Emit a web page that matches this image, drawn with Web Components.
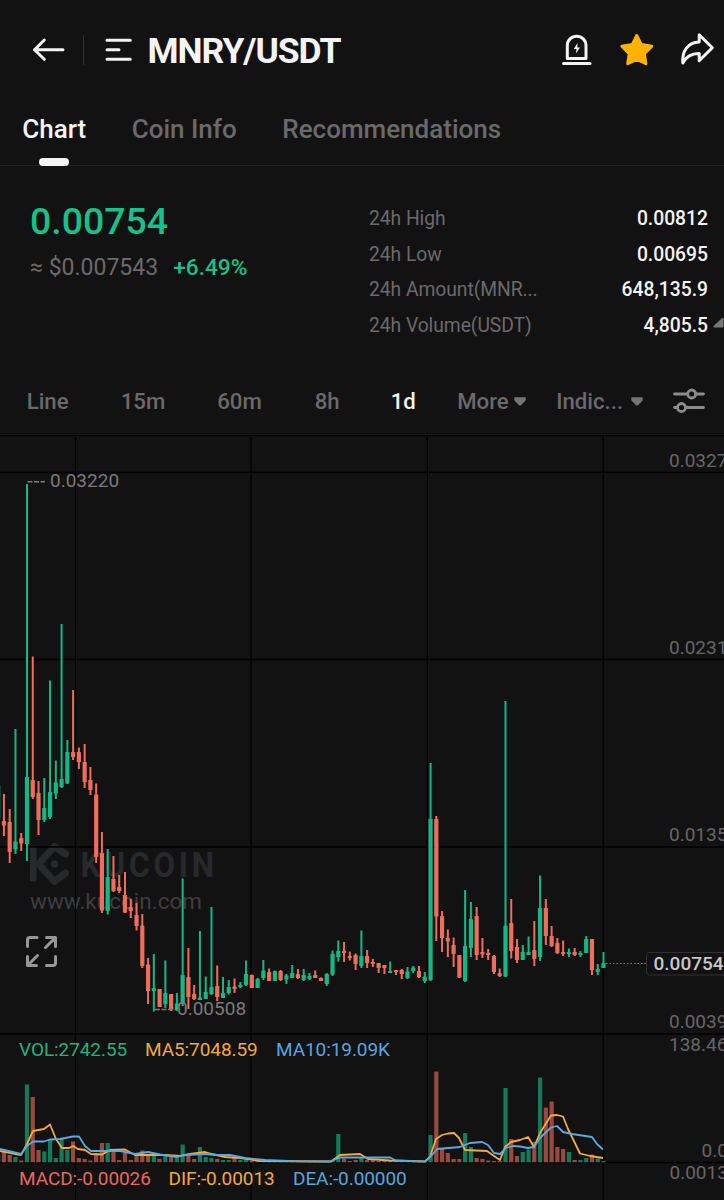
<!DOCTYPE html>
<html lang="en">
<head>
<meta charset="UTF-8">
<meta name="viewport" content="width=device-width, initial-scale=1.0">
<title>MNRY/USDT</title>
<style>
  body {
    margin: 0;
    width: 724px;
    height: 1200px;
    overflow: hidden;
    background: #121212;
    color: #f4f4f4;
    font-family: Roboto, "Liberation Sans", sans-serif;
    --muted: #6a6a6a;
    --up: #18c08a;
    --line: #242424;
  }
</style>
</head>
<body>
  <pair-header>MNRY/USDT</pair-header>

  <page-tabs>
    <tab-item active>Chart</tab-item>
    <tab-item>Coin Info</tab-item>
    <tab-item>Recommendations</tab-item>
  </page-tabs>

  <price-summary>
    <span slot="price">0.00754</span>
    <span slot="fiat">≈ $0.007543</span>
    <span slot="change">+6.49%</span>
    <stat-row label="24h High">0.00812</stat-row>
    <stat-row label="24h Low">0.00695</stat-row>
    <stat-row label="24h Amount(MNR...">648,135.9</stat-row>
    <stat-row label="24h Volume(USDT)">4,805.5</stat-row>
  </price-summary>

  <period-bar>
    <period-item>Line</period-item>
    <period-item>15m</period-item>
    <period-item>60m</period-item>
    <period-item>8h</period-item>
    <period-item active>1d</period-item>
    <period-item menu>More</period-item>
    <period-item menu style="--menu-gap: 8px">Indic...</period-item>
  </period-bar>

  <kline-chart></kline-chart>

<script>
class PairHeader extends HTMLElement {
  constructor() {
    super();
    this.attachShadow({ mode: 'open' });
  }

  connectedCallback() {
    this.shadowRoot.innerHTML = `
      <style>
        :host {
          display: flex;
          align-items: center;
          box-sizing: border-box;
          height: 100px;
          padding: 0 7px 0 30px;
        }

        svg {
          display: block;
          flex: none;
          fill: none;
          stroke: #f4f4f4;
          stroke-width: 3;
          stroke-linecap: round;
          stroke-linejoin: round;
        }

        .divider {
          width: 1px;
          height: 30px;
          margin: 0 20px 0 15px;
          background: #303030;
        }

        h1 {
          flex: 1;
          margin: 1px 0 0 13.500px;
          font-size: 35.500px;
          line-height: 42px;
          font-weight: 700;
          letter-spacing: -1.050px;
        }

        .actions {
          display: flex;
          gap: 20px;
        }
      </style>

      <svg width="38" height="40" viewBox="30 30 38 40"><path d="M63 49.7H34.500M44.300 40L34.500 49.700L44.300 59.300"/></svg>
      <span class="divider"></span>
      <svg width="30" height="40" viewBox="104 30 30 40"><path d="M107 40.200H130.300M107 49.700H119M107 59.200H130.300"/></svg>
      <h1><slot></slot></h1>
      <div class="actions">
        <svg width="40" height="40" viewBox="557 30 40 40">
          <path d="M567.300 58.500V45.500A9.350 9.350 0 0 1 586 45.500V58.500Z"/>
          <path d="M563.500 63.500H590"/>
          <path d="M577.500 43L573.800 49H576.500L576 53.500L580 47.500H577.300Z" style="fill:#f4f4f4;stroke:none"/>
        </svg>
        <svg width="40" height="40" viewBox="617 30 40 40">
          <path style="fill:#ffb300;stroke:#ffb300" d="M636.800 35.500L641.300 44.600L651.800 46.200L644.400 53.700L645.900 63.700L636.800 59.300L627.700 63.700L629.200 53.700L621.900 46.200L632.300 44.600Z"/>
        </svg>
        <svg width="40" height="40" viewBox="677 30 40 40">
          <path d="M699.200 34.800L712.300 47.700L699.200 60.800V53.500C690.500 53.300 686 57 682.800 63C681.800 51 688 42.300 699.200 42Z"/>
        </svg>
      </div>
    `;
  }
}

class PageTabs extends HTMLElement {
  constructor() {
    super();
    this.attachShadow({ mode: 'open' });
  }

  connectedCallback() {
    this.shadowRoot.innerHTML = `
      <style>
        :host {
          display: flex;
          gap: 45.500px;
          box-sizing: border-box;
          height: 66px;
          padding-left: 22.300px;
          border-bottom: 1px solid var(--line);
        }
      </style>
      <slot></slot>
    `;
  }
}

class TabItem extends HTMLElement {
  constructor() {
    super();
    this.attachShadow({ mode: 'open' });
  }

  connectedCallback() {
    this.shadowRoot.innerHTML = `
      <style>
        :host {
          display: flex;
          flex-direction: column;
          align-items: center;
          justify-content: space-between;
          box-sizing: border-box;
          height: 66px;
          padding-top: 13px;
          color: var(--muted);
          font-size: 26px;
          line-height: 32px;
          font-weight: 500;
        }

        :host([active]) {
          color: #f4f4f4;
        }

        i {
          display: none;
          width: 30px;
          height: 8px;
          border-radius: 4px;
          background: #f4f4f4;
        }

        :host([active]) i {
          display: block;
        }
      </style>
      <span><slot></slot></span>
      <i></i>
    `;
  }
}

class PriceSummary extends HTMLElement {
  constructor() {
    super();
    this.attachShadow({ mode: 'open' });
  }

  connectedCallback() {
    this.shadowRoot.innerHTML = `
      <style>
        :host {
          display: flex;
          justify-content: space-between;
          box-sizing: border-box;
          height: 200px;
          padding: 32px 0 0 30px;
        }

        .price {
          color: var(--up);
          font-size: 37.400px;
          line-height: 46px;
          font-weight: 500;
        }

        .sub {
          display: flex;
          gap: 15px;
          margin-top: 10px;
          color: var(--muted);
          font-size: 23px;
          line-height: 28px;
        }

        .change {
          color: var(--up);
          font-size: 22.700px;
          font-weight: 500;
        }

        .stats {
          display: flex;
          flex-direction: column;
          width: 339px;
          padding-top: 3px;
        }

        .stats-wrap {
          display: flex;
          align-items: flex-start;
        }

        .corner {
          flex: none;
          width: 16px;
          height: 12px;
          margin-top: 119px;
        }
      </style>
      <div>
        <div class="price"><slot name="price"></slot></div>
        <div class="sub">
          <slot name="fiat"></slot>
          <span class="change"><slot name="change"></slot></span>
        </div>
      </div>
      <div class="stats-wrap">
        <div class="stats"><slot></slot></div>
        <svg class="corner" viewBox="0 0 16 12"><path d="M6.500 9.500L14.500 2V9.500Z" fill="#777" stroke="#777" stroke-width="2" stroke-linejoin="round"/></svg>
      </div>
    `;
  }
}

class StatRow extends HTMLElement {
  constructor() {
    super();
    this.attachShadow({ mode: 'open' });
  }

  connectedCallback() {
    this.shadowRoot.innerHTML = `
      <style>
        :host {
          display: flex;
          justify-content: space-between;
          height: 35.600px;
          font-size: 19.300px;
          line-height: 35.600px;
        }

        .label {
          color: var(--muted);
          letter-spacing: -0.050px;
        }

        .value {
          font-weight: 500;
        }
      </style>
      <span class="label">${this.getAttribute('label')}</span>
      <span class="value"><slot></slot></span>
    `;
  }
}

class PeriodBar extends HTMLElement {
  constructor() {
    super();
    this.attachShadow({ mode: 'open' });
  }

  connectedCallback() {
    this.shadowRoot.innerHTML = `
      <style>
        :host {
          display: grid;
          grid-template-columns: 94px 96.500px 97.500px 76px 66.500px 99px 114.500px 36px;
          align-items: center;
          box-sizing: border-box;
          height: 69px;
          padding: 1px 0 0 26.700px;
        }

        svg {
          display: block;
          fill: none;
          stroke: #8c8c8c;
          stroke-width: 2.800;
          stroke-linecap: round;
        }
      </style>
      <slot></slot>
      <svg width="36" height="30" viewBox="671 386 36 30">
        <path d="M674.500 394H687M696 394H703.500M674.500 407.500H677M686 407.500H703.500"/>
        <circle cx="691.700" cy="394" r="4"/>
        <circle cx="681.500" cy="407.500" r="4"/>
      </svg>
    `;
  }
}

class PeriodItem extends HTMLElement {
  constructor() {
    super();
    this.attachShadow({ mode: 'open' });
  }

  connectedCallback() {
    const caret = this.hasAttribute('menu')
      ? '<svg width="12" height="9" viewBox="0 0 12 9"><path d="M1 1H11V3L6.500 7.800H5.500L1 3Z"/></svg>'
      : '';

    this.shadowRoot.innerHTML = `
      <style>
        :host {
          display: flex;
          align-items: center;
          color: var(--muted);
          font-size: 22.200px;
          line-height: 28px;
          font-weight: 500;
          white-space: nowrap;
        }

        :host([active]) {
          color: #f4f4f4;
        }

        svg {
          flex: none;
          margin-left: var(--menu-gap, 5px);
          fill: #747474;
          stroke: #747474;
          stroke-width: 1.500;
          stroke-linejoin: round;
        }
      </style>
      <slot></slot>${caret}
    `;
  }
}

// side, high, body top, body bottom, low, volume top
const CANDLES = [
  ['u', 778, 785, 818, 820, 1154],
  ['d', 794, 821, 825.5, 836, 1152],
  ['d', 809, 822, 852, 863, 1155],
  ['u', 729, 841.5, 849.5, 854, 1157],
  ['d', 833, 838, 843.5, 851, 1160.5],
  ['u', 484, 777, 844, 861, 1084.5],
  ['d', 656.5, 780, 797, 799, 1097],
  ['d', 781, 793, 820, 835, 1150],
  ['u', 778, 808, 820, 822, 1151.5],
  ['u', 680.5, 792, 817, 819, 1140],
  ['u', 760.5, 782.5, 793.5, 799, 1158],
  ['u', 624, 779, 787, 788, 1139],
  ['u', 740, 752, 783.5, 784, 1150],
  ['d', 690, 752, 757, 760, 1141.5],
  ['d', 747.5, 752, 762, 769, 1158],
  ['d', 744, 762, 782, 788, 1159],
  ['d', 767, 780, 790, 795, 1160.5],
  ['d', 783.5, 794.5, 857, 863, 1153],
  ['d', 832, 853, 910.5, 913, 1143],
  ['u', 849, 877, 911, 914.5, 1143],
  ['d', 856, 879, 891, 892, 1151],
  ['d', 875, 887, 891, 893, 1160],
  ['d', 872, 895, 912.5, 913, 1153],
  ['d', 899, 907, 911, 918, 1160],
  ['d', 903, 915, 926, 930.5, 1155],
  ['d', 914, 925.5, 966, 968, 1150.5],
  ['d', 958, 964.5, 991, 1004, 1154],
  ['u', 954, 988, 991, 1011.5, 1156],
  ['d', 989, 989, 1007, 1007, 1159],
  ['u', 960.5, 993, 1004, 1008, 1156],
  ['d', 994, 994, 1010, 1011, 1157],
  ['u', 993, 1003.5, 1009, 1011, 1157],
  ['u', 878.5, 975, 1004, 1006, 1144.5],
  ['d', 948, 977, 997, 1009, 1155],
  ['d', 985, 994, 999, 1000, 1159],
  ['u', 931, 997.5, 1000, 1000, 1147],
  ['u', 976.5, 992, 999, 999, 1157],
  ['u', 907, 987, 994, 995, 1158],
  ['d', 965.5, 986, 997, 1001, 1159],
  ['u', 977, 993, 998, 998, 1160],
  ['u', 980, 987, 993, 994.5, 1160],
  ['d', 978.5, 986.5, 989, 993, 1158],
  ['u', 982, 985, 987, 988, 1160],
  ['u', 960.5, 974, 985, 986, 1160],
  ['d', 974.5, 975, 988, 988, 1161],
  ['u', 978, 979, 988, 988, 1161],
  ['u', 960, 970.5, 978, 980, 1161],
  ['d', 968.5, 972, 981, 981, 1161],
  ['u', 970.5, 971, 981, 981, 1161],
  ['d', 970, 971, 980, 981, 1161],
  ['u', 974, 975.5, 979.5, 984, 1161],
  ['u', 965, 973, 978, 978, 1161],
  ['d', 969, 974, 978, 979, 1161],
  ['u', 969, 975, 980, 981, 1161],
  ['u', 973, 976, 979, 980, 1161],
  ['d', 970.5, 975, 978, 978, 1161],
  ['d', 977.5, 978, 981, 981, 1161],
  ['u', 973, 974, 984, 986, 1161],
  ['u', 950.5, 954, 974.5, 976, 1160],
  ['u', 940.5, 951, 957, 961.5, 1134],
  ['d', 942, 951, 953, 962, 1158.5],
  ['d', 951.5, 956, 958, 960.5, 1161],
  ['d', 953.5, 955, 964, 970, 1160],
  ['u', 930.5, 956, 966, 968, 1158],
  ['d', 950, 956, 963, 968, 1160],
  ['d', 959, 962, 964, 967, 1160],
  ['d', 963, 963, 968, 973, 1161],
  ['d', 965, 965, 968, 974, 1161],
  ['u', 961.5, 971, 973, 973, 1161],
  ['d', 970, 970, 972, 975, 1161],
  ['d', 969, 970, 974, 979, 1161],
  ['u', 967, 971.5, 978, 979, 1161],
  ['u', 966, 967.5, 971, 973, 1161],
  ['d', 966, 971, 977, 978, 1161],
  ['u', 972, 976.5, 981, 983, 1161],
  ['u', 763, 819, 980, 981, 1135],
  ['d', 816, 819, 916.5, 941, 1071.5],
  ['d', 911, 916, 938, 952, 1149],
  ['d', 929.5, 938, 941.5, 957, 1153],
  ['d', 937.5, 945, 954, 967, 1159],
  ['d', 955, 955, 977.5, 978, 1159],
  ['u', 890, 946, 981, 982, 1133],
  ['u', 902, 919, 948, 957, 1147],
  ['d', 907, 916, 955, 960, 1158],
  ['d', 938, 952, 954.5, 958, 1159],
  ['d', 949, 953, 955, 960, 1160.5],
  ['d', 955, 956, 972, 974, 1161],
  ['d', 968.5, 973, 976, 977, 1161],
  ['u', 701, 925.5, 976.5, 977, 1088],
  ['d', 899, 923, 951, 958.5, 1139],
  ['d', 939, 947, 960, 963, 1156],
  ['u', 945, 952, 960, 960, 1152],
  ['u', 936.5, 952, 955, 955, 1149.5],
  ['d', 921, 950, 959, 966, 1142],
  ['u', 875.5, 908, 957, 961, 1077.5],
  ['d', 899, 908, 936, 945, 1107.5],
  ['d', 926, 936, 946, 947, 1101.5],
  ['d', 938, 943, 953, 954, 1147],
  ['d', 940.5, 952, 954, 956, 1149],
  ['u', 948.5, 952, 954, 957, 1152],
  ['d', 948, 952, 955, 956, 1160],
  ['u', 951, 953, 955, 957, 1160],
  ['u', 936, 939, 953, 953, 1158],
  ['d', 939, 939, 970, 975, 1154.5],
  ['u', 964, 969, 972, 975, 1158.5],
  ['u', 952, 963, 968, 968, 1161],
];

const FIRST_X = -1.83;
const STEP = 5.765;
const VOL_BASE = 1162.3;

const MA5 = '0,1151 21,1155 27,1144 33,1131 44,1129 50,1124.5 56,1139 62,1148 69,1148 73,1146 78,1149 85,1150 91,1154 102,1154.5 110,1150 125,1149.5 135,1155 148,1155 165,1155 180,1156 190,1154 205,1152 212,1154 225,1157 240,1158 260,1161 331,1161.5 340,1155 360,1154 368,1159 390,1160.5 425,1161.5 430,1157 436,1139 442,1135 448,1133.5 454,1133 459,1138 465,1150 487,1151 494,1156 500,1160 505,1147 511,1142 520,1140 528,1137 534,1147 540,1133 551,1115.5 557,1115 563,1116.5 568,1129 580,1153.5 590,1156 603,1158';
const MA10 = '0,1149 21,1154 27,1146 33,1141.5 44,1141.5 50,1139.5 60,1139 73,1136.5 79,1136.5 85,1146 91,1151 108,1151 120,1151 135,1154 148,1152 160,1154.5 177,1157 185,1155 205,1154 215,1155 230,1155 245,1158 265,1160 300,1161.3 330,1161.5 340,1157.5 390,1157.5 396,1160.5 425,1161.5 432,1155 437,1149 460,1147 470,1143 482,1142 488,1145 494,1153 500,1154 506,1148 513,1146 520,1146.5 528,1148 534,1147 540,1138 551,1127.5 557,1126 563,1132 572,1134 592,1137 597,1144 603,1149.5';

class KlineChart extends HTMLElement {
  constructor() {
    super();
    this.attachShadow({ mode: 'open' });
  }

  connectedCallback() {
    this.render();
  }

  candles() {
    return CANDLES.map(([side, high, top, bottom, low], i) => {
      const x = FIRST_X + i * STEP;
      const height = Math.max(bottom - top, 2);
      return `<g class="${side}">
        <rect x="${(x - 1).toFixed(2)}" y="${high}" width="2" height="${low - high}"/>
        <rect x="${(x - 2.1).toFixed(2)}" y="${top}" width="4.2" height="${height}" rx="0.6"/>
      </g>`;
    }).join('');
  }

  volumes() {
    return CANDLES.map(([side, , , , , top], i) => {
      const x = FIRST_X + i * STEP;
      return `<rect class="v${side}" x="${(x - 2.1).toFixed(2)}" y="${top}" width="4.2" height="${(VOL_BASE - top).toFixed(1)}"/>`;
    }).join('');
  }

  render() {
    this.shadowRoot.innerHTML = `
      <style>
        :host {
          display: block;
          height: 765px;
        }

        svg {
          display: block;
          font-size: 19px;
          font-family: inherit;
        }

        .grid {
          stroke: #000;
          stroke-width: 1.300;
        }

        .u { fill: #14b887; }
        .d { fill: #ee6e5b; }
        .vu { fill: #15795a; }
        .vd { fill: #984a40; }

        .ma {
          fill: none;
          stroke-width: 1.800;
          stroke-linejoin: round;
        }

        .axis { fill: #666; }
        .mark { fill: #7a7a7a; }
        .dash { stroke: #7a7a7a; stroke-width: 1.500; stroke-dasharray: 5 1.500; }
        .brand { fill: #27292b; }

        .expand {
          fill: none;
          stroke: #979797;
          stroke-width: 3;
          stroke-linecap: round;
          stroke-linejoin: round;
        }
      </style>

      <svg width="724" height="765" viewBox="0 435 724 765">
        <g class="brand">
          <rect x="30" y="847" width="6.500" height="34.500" rx="2.500"/>
          <path d="M65.500 854L54.500 846.500L38.500 864L54.500 881.500L65.500 873" fill="none" stroke="#27292b" stroke-width="7" stroke-linejoin="round" stroke-linecap="round"/>
          <circle cx="54.500" cy="864" r="3.800"/>
          <text transform="translate(80.500 877) scale(0.880 1)" font-size="36" font-weight="700" letter-spacing="4.200">KUCOIN</text>
        </g>
        <text x="30" y="908.500" font-size="22.500" fill="#3e3e3e" textLength="172">www.kucoin.com</text>

        <path class="grid" d="M0 435.500H724M0 472.500H724M0 659.500H724M0 847H724M0 1034H724M0 1162.500H724M75.500 435V1200M251 435V1200M427.300 435V1200M603.200 435V1200"/>

        <g>${this.candles()}</g>
        <g>${this.volumes()}</g>
        <polyline class="ma" stroke="#f5a93e" points="${MA5}"/>
        <polyline class="ma" stroke="#5aaae2" points="${MA10}"/>

        <path class="dash" d="M27.500 481.800H45"/>
        <text class="mark" x="50" y="487.300">0.03220</text>
        <path class="dash" d="M155 1009.500H176"/>
        <text class="mark" x="177" y="1015.300">0.00508</text>

        <path class="expand" d="M27.500 946.500V940Q27.500 937.500 30 937.500H37M46.500 937.500H55.500V946.500M54.500 938.500L45.500 947.500M27.500 956.500V965.500H36.500M28.500 964.500L37.500 955.500M55.500 956.500V963Q55.500 965.500 53 965.500H46.500"/>

        <g class="axis">
          <text x="669" y="467">0.0327</text>
          <text x="669" y="654.300">0.0231</text>
          <text x="669" y="841">0.0135</text>
          <text x="669" y="1028">0.0039</text>
          <text x="669" y="1051">138.46</text>
          <text x="701.500" y="1157">0.0</text>
          <text x="669.500" y="1179.300">0.0013</text>
        </g>

        <path d="M606 963.500H646" stroke="#7a7a7a" stroke-width="1.200" stroke-dasharray="1.500 2"/>
        <rect x="646.500" y="952.500" width="90" height="22.500" rx="3" fill="#121212" stroke="#303030"/>
        <text x="653.500" y="969.700" fill="#c8c8c8" font-weight="500">0.00754</text>

        <g letter-spacing="-0.080">
          <text x="19" y="1056.300" fill="#1fb381">VOL:2742.55</text>
          <text x="145" y="1056.300" fill="#f2a83f">MA5:7048.59</text>
          <text x="276" y="1056.300" fill="#55a6e0">MA10:19.09K</text>
          <text x="19" y="1185" fill="#e8685b">MACD:-0.00026</text>
          <text x="168.500" y="1185" fill="#f2a83f">DIF:-0.00013</text>
          <text x="293" y="1185" fill="#55a6e0">DEA:-0.00000</text>
        </g>
      </svg>
    `;
  }
}

customElements.define('pair-header', PairHeader);
customElements.define('page-tabs', PageTabs);
customElements.define('tab-item', TabItem);
customElements.define('price-summary', PriceSummary);
customElements.define('stat-row', StatRow);
customElements.define('period-bar', PeriodBar);
customElements.define('period-item', PeriodItem);
customElements.define('kline-chart', KlineChart);
</script>
</body>
</html>
